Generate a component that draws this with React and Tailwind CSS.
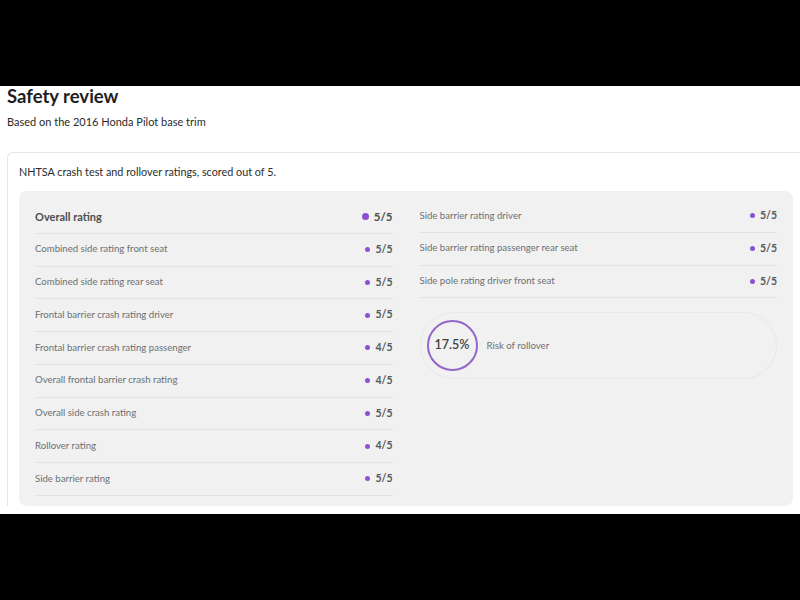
import React from 'react';

const leftRows = [
  ['Combined side rating front seat', '5/5'],
  ['Combined side rating rear seat', '5/5'],
  ['Frontal barrier crash rating driver', '5/5'],
  ['Frontal barrier crash rating passenger', '4/5'],
  ['Overall frontal barrier crash rating', '4/5'],
  ['Overall side crash rating', '5/5'],
  ['Rollover rating', '4/5'],
  ['Side barrier rating', '5/5'],
];

const rightRows = [
  ['Side barrier rating driver', '5/5'],
  ['Side barrier rating passenger rear seat', '5/5'],
  ['Side pole rating driver front seat', '5/5'],
];

const Row = ({ label, value, strong }) => (
  <div className="flex h-[32.75px] items-center justify-between border-b border-[#e2e3e2]">
    <span className={strong ? 'text-[11px] font-bold text-[#4b4e51]' : 'text-[9.6px] text-[#6d7073]'}>{label}</span>
    <span className="flex items-center gap-[5px]">
      <span className={strong ? 'h-[7px] w-[7px] rounded-full bg-[#8a52cf]' : 'h-[5px] w-[5px] rounded-full bg-[#8a52cf]'} />
      <span className={strong ? 'text-[11.5px] font-bold text-[#4b4e51]' : 'text-[10.5px] font-bold text-[#55585b]'}>{value}</span>
    </span>
  </div>
);

export default function App() {
  return (
    <div className="flex h-[600px] w-[800px] flex-col bg-black" style={{ fontFamily: 'Lato, "Noto Sans", sans-serif' }}>
      <div className="h-[86px]" />
      <div className="h-[428px] overflow-hidden bg-white pl-[7px]">
        <h1 className="text-[18.5px] font-bold leading-[20px] text-[#1d1d1f]">Safety review</h1>
        <p className="mt-[9px] text-[11px] leading-[14px] text-[#2b2b2b]">Based on the 2016 Honda Pilot base trim</p>
        <div className="mt-[23px] rounded-tl-[6px] border border-r-0 border-b-0 border-[#e5e6e5] pl-[11px] pr-[7px] pt-[12px]">
          <p className="text-[10.8px] leading-[14px] text-[#2b2b2b]">NHTSA crash test and rollover ratings, scored out of 5.</p>
          <div className="mt-[12px] grid grid-cols-2 gap-x-[27px] rounded-[8px] bg-[#f0f1f0] px-[16px] pb-[10px] pt-[9px]">
            <div className="pt-[1px]">
              <Row label="Overall rating" value="5/5" strong />
              {leftRows.map(([l, v]) => (
                <Row key={l} label={l} value={v} />
              ))}
            </div>
            <div>
              {rightRows.map(([l, v]) => (
                <Row key={l} label={l} value={v} />
              ))}
              <div className="mt-[14px] flex h-[67px] items-center gap-[9px] rounded-full border border-[#e6e7e6] pl-[6px] pr-[8px]">
                <div className="flex h-[51px] w-[51px] items-center justify-center rounded-full border-2 border-[#9466c9]">
                  <span className="text-[12.5px] font-semibold text-[#3d4043]">17.5%</span>
                </div>
                <span className="text-[9.6px] text-[#6d7073]">Risk of rollover</span>
              </div>
            </div>
          </div>
        </div>
      </div>
    </div>
  );
}
